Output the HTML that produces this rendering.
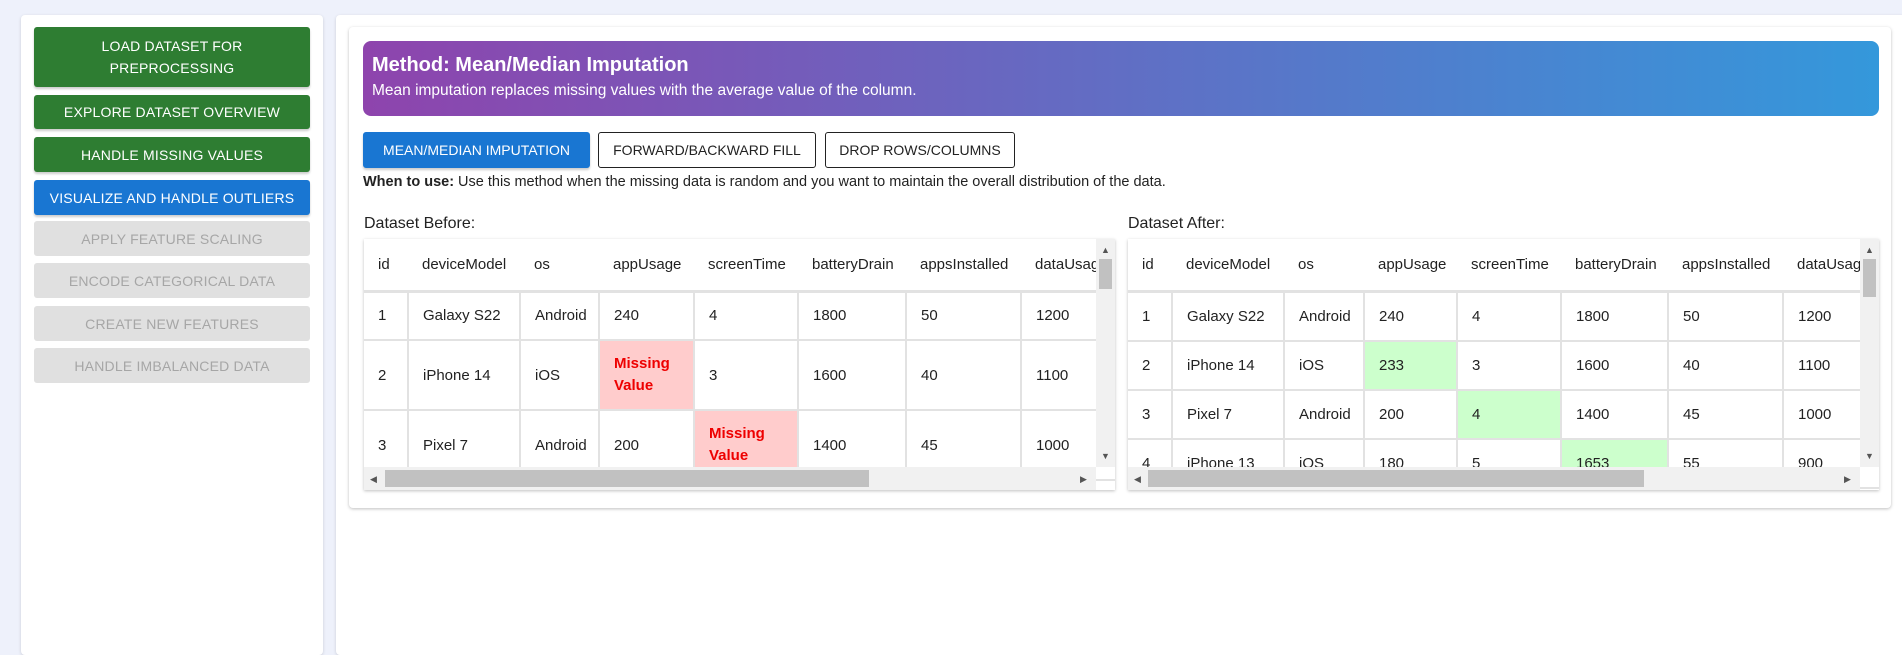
<!DOCTYPE html>
<html><head><meta charset="utf-8"><style>
*{box-sizing:border-box;margin:0;padding:0}
body{width:1902px;height:643px;overflow:hidden;background:#eef1fb;font-family:"Liberation Sans",sans-serif;position:relative;color:#222}
.abs{position:absolute}
.side{left:21px;top:15px;width:302px;height:640px;background:#fff;border-radius:4px;box-shadow:0 1px 3px rgba(0,0,0,.15)}
.btn{position:absolute;left:34px;width:276px;color:#fff;font-size:14px;text-align:center;display:flex;align-items:center;justify-content:center;border-radius:3px;box-shadow:0 2px 2px rgba(0,0,0,.2);line-height:22px;letter-spacing:.2px}
.g{background:#2e7d32}.b{background:#1976d2}.d{background:#e0e0e0;color:#a6a6a6;box-shadow:none}
.main{left:336px;top:15px;width:1570px;height:640px;background:#fff;border-radius:4px;box-shadow:0 1px 3px rgba(0,0,0,.15)}
.paper{left:349px;top:27px;width:1542px;height:481px;background:#fff;border-radius:4px;box-shadow:0 1px 3px rgba(0,0,0,.25)}
.banner{left:363px;top:41px;width:1516px;height:75px;border-radius:8px;background:linear-gradient(90deg,#8e44ad,#3498db);color:#fff;padding:12px 9px}
.banner h1{font-size:20px;font-weight:bold;line-height:24px}
.banner p{font-size:15.5px;line-height:22px;margin-top:3px}
.mb{position:absolute;top:132px;height:36px;font-size:14px;display:flex;align-items:center;justify-content:center;border:1px solid #222;border-radius:3px;color:#222}
.tw{position:absolute;top:239px;width:751px;height:251px;box-shadow:0 1px 3px rgba(0,0,0,.25);overflow:hidden;background:#fff}
table{border-collapse:collapse;table-layout:fixed;font-size:15px}
td,th{padding:0 0 0 14px;text-align:left;font-weight:normal;border:2px solid #e2e2e2;white-space:nowrap;overflow:hidden}
th{border:none;border-bottom:3px solid #e2e2e2;height:52px}
tr>*:first-child{border-left:none}
.m{background:#ffcccc;color:#e00;font-weight:bold;white-space:normal;line-height:22px}
.ok{background:#ccffcc}
.vs{position:absolute;right:0;top:0;width:19px;height:228px;background:#f1f1f1}
.hs{position:absolute;left:0;bottom:0;height:23px;width:732px;background:#f1f1f1}
.thumb{position:absolute;background:#c1c1c1}
.ar{position:absolute;font-size:9px;color:#555;line-height:10px}
.lbl{position:absolute;top:215px;font-size:16px;color:#222}
</style></head><body>
<div class="abs side"></div>
<div class="btn g" style="top:27px;height:60px">LOAD DATASET FOR<br>PREPROCESSING</div>
<div class="btn g" style="top:95px;height:34px">EXPLORE DATASET OVERVIEW</div>
<div class="btn g" style="top:137px;height:35px">HANDLE MISSING VALUES</div>
<div class="btn b" style="top:180px;height:35px">VISUALIZE AND HANDLE OUTLIERS</div>
<div class="btn d" style="top:221px;height:35px">APPLY FEATURE SCALING</div>
<div class="btn d" style="top:263px;height:35px">ENCODE CATEGORICAL DATA</div>
<div class="btn d" style="top:306px;height:35px">CREATE NEW FEATURES</div>
<div class="btn d" style="top:348px;height:35px">HANDLE IMBALANCED DATA</div>

<div class="abs main"></div>
<div class="abs paper"></div>
<div class="abs banner"><h1>Method: Mean/Median Imputation</h1><p>Mean imputation replaces missing values with the average value of the column.</p></div>
<div class="mb" style="left:363px;width:227px;background:#1976d2;color:#fff;border-color:#1976d2;box-shadow:0 2px 2px rgba(0,0,0,.2)">MEAN/MEDIAN IMPUTATION</div>
<div class="mb" style="left:598px;width:218px">FORWARD/BACKWARD FILL</div>
<div class="mb" style="left:825px;width:190px">DROP ROWS/COLUMNS</div>
<div class="abs" style="left:363px;top:173px;font-size:14.5px;line-height:18px"><b>When to use:</b> Use this method when the missing data is random and you want to maintain the overall distribution of the data.</div>

<div class="lbl" style="left:364px">Dataset Before:</div>
<div class="tw" style="left:364px">
<table style="width:820px">
<colgroup><col style="width:44px"><col style="width:112px"><col style="width:79px"><col style="width:95px"><col style="width:104px"><col style="width:108px"><col style="width:115px"><col style="width:163px"></colgroup>
<tr><th>id</th><th>deviceModel</th><th>os</th><th>appUsage</th><th>screenTime</th><th>batteryDrain</th><th>appsInstalled</th><th>dataUsage</th></tr>
<tr style="height:49px"><td>1</td><td>Galaxy S22</td><td>Android</td><td>240</td><td>4</td><td>1800</td><td>50</td><td>1200</td></tr>
<tr style="height:70px"><td>2</td><td>iPhone 14</td><td>iOS</td><td class="m">Missing Value</td><td>3</td><td>1600</td><td>40</td><td>1100</td></tr>
<tr style="height:70px"><td>3</td><td>Pixel 7</td><td>Android</td><td>200</td><td class="m">Missing Value</td><td>1400</td><td>45</td><td>1000</td></tr>
</table>
<div class="vs"><div class="ar" style="left:5px;top:6px">▲</div><div class="thumb" style="left:3px;top:20px;width:13px;height:30px"></div><div class="ar" style="left:5px;top:212px">▼</div></div>
<div class="hs"><div class="ar" style="left:6px;top:7px">◀</div><div class="thumb" style="left:21px;top:3px;width:484px;height:17px"></div><div class="ar" style="left:716px;top:7px">▶</div></div>
</div>

<div class="lbl" style="left:1128px">Dataset After:</div>
<div class="tw" style="left:1128px">
<table style="width:820px">
<colgroup><col style="width:44px"><col style="width:112px"><col style="width:80px"><col style="width:93px"><col style="width:104px"><col style="width:107px"><col style="width:115px"><col style="width:165px"></colgroup>
<tr><th>id</th><th>deviceModel</th><th>os</th><th>appUsage</th><th>screenTime</th><th>batteryDrain</th><th>appsInstalled</th><th>dataUsage</th></tr>
<tr style="height:50px"><td>1</td><td>Galaxy S22</td><td>Android</td><td>240</td><td>4</td><td>1800</td><td>50</td><td>1200</td></tr>
<tr style="height:49px"><td>2</td><td>iPhone 14</td><td>iOS</td><td class="ok">233</td><td>3</td><td>1600</td><td>40</td><td>1100</td></tr>
<tr style="height:49px"><td>3</td><td>Pixel 7</td><td>Android</td><td>200</td><td class="ok">4</td><td>1400</td><td>45</td><td>1000</td></tr>
<tr style="height:49px"><td>4</td><td>iPhone 13</td><td>iOS</td><td>180</td><td>5</td><td class="ok">1653</td><td>55</td><td>900</td></tr>
</table>
<div class="vs"><div class="ar" style="left:5px;top:6px">▲</div><div class="thumb" style="left:3px;top:20px;width:13px;height:38px"></div><div class="ar" style="left:5px;top:212px">▼</div></div>
<div class="hs"><div class="ar" style="left:6px;top:7px">◀</div><div class="thumb" style="left:20px;top:3px;width:496px;height:17px"></div><div class="ar" style="left:716px;top:7px">▶</div></div>
</div>
</body></html>
